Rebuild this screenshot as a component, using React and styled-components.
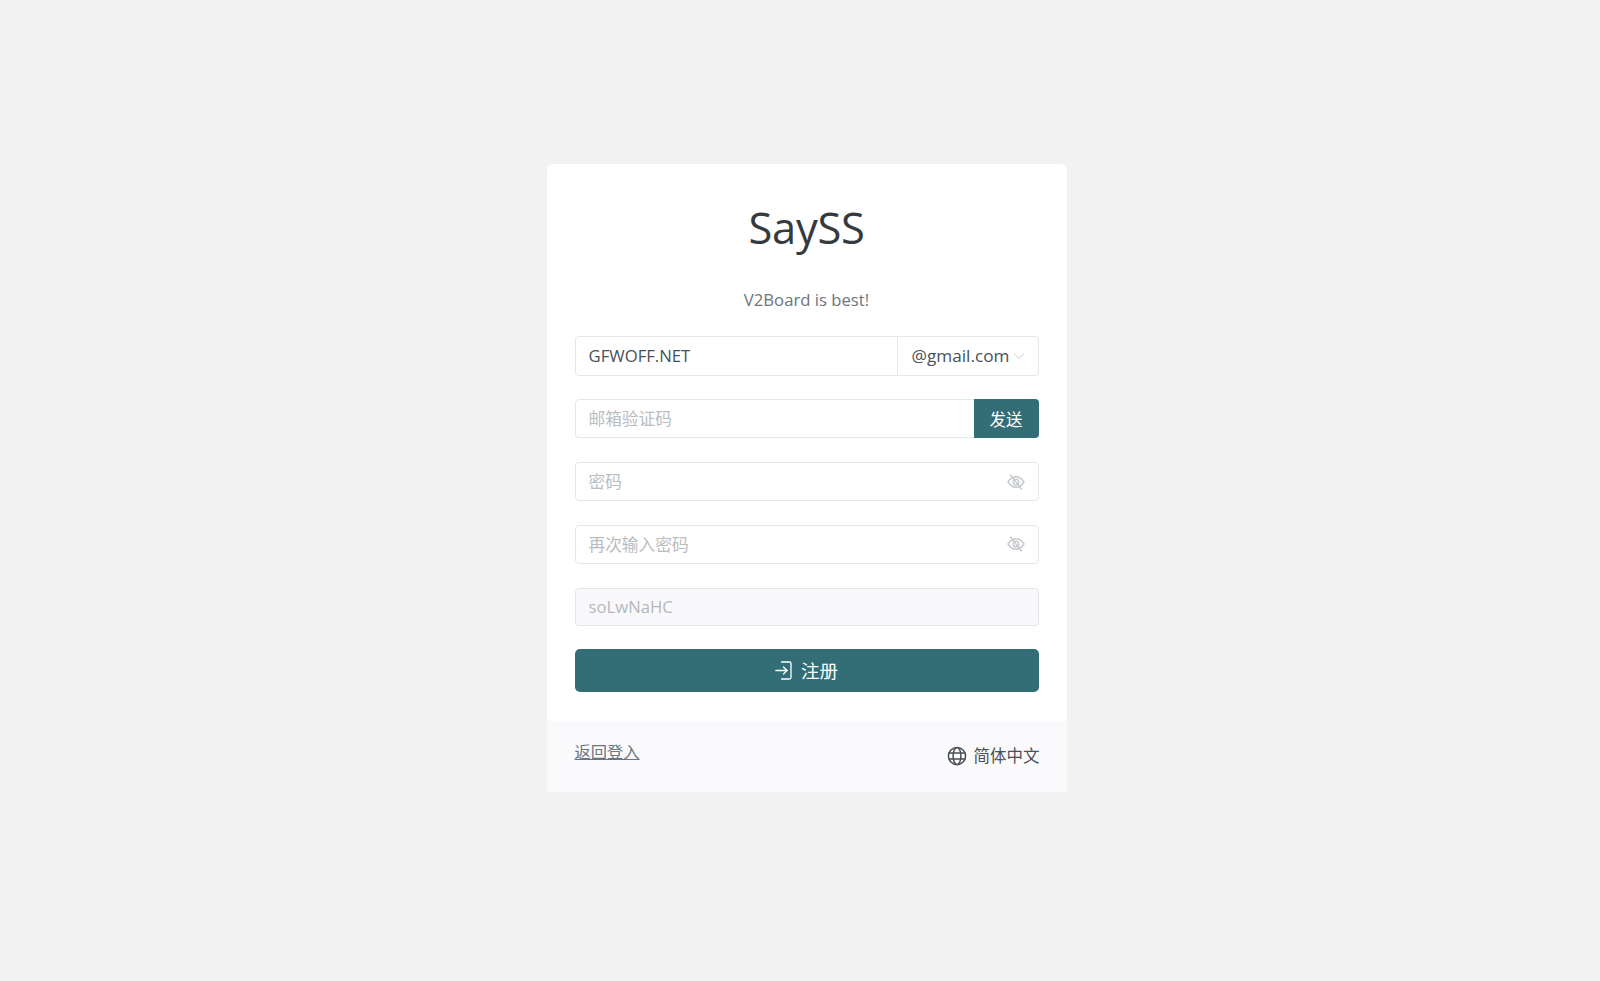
import React from "react";
import styled, { createGlobalStyle } from "styled-components";

const FONT = `"Open Sans", "Noto Sans CJK SC", sans-serif`;

const Global = createGlobalStyle`
  html, body { margin: 0; padding: 0; background: #f2f2f2; }
  body { font-family: ${FONT}; color: #3a3f44; }
  * { box-sizing: border-box; }
`;

const Page = styled.div`
  min-height: 981px;
  display: flex;
  justify-content: center;
  align-items: flex-start;
  padding: 164px 0 0 13px;
  background: #f2f2f2;
`;

const Card = styled.main`
  width: 520px;
  height: 628px;
  background: #fff;
  border-radius: 6px 6px 2px 2px;
  display: flex;
  flex-direction: column;
  overflow: hidden;
`;

const Body = styled.div`
  flex: 1;
  padding: 0 28px;
  display: flex;
  flex-direction: column;
`;

const Title = styled.h1`
  margin: 34px 0 0;
  font-size: 43.5px;
  line-height: 60px;
  font-weight: 400;
  text-align: center;
  color: #343a40;
  letter-spacing: -0.3px;
`;

const Subtitle = styled.p`
  margin: 30px 0 0;
  font-size: 16.7px;
  line-height: 24px;
  text-align: center;
  color: #6c757d;
`;

const Form = styled.form`
  margin: 0;
  padding-top: 24px;
  display: flex;
  flex-direction: column;
  gap: 23.4px;
`;

const Field = styled.div`
  height: ${(p) => (p.$disabled ? "38.3px" : "39.5px")};
  display: flex;
  align-items: stretch;
  background: ${(p) => (p.$disabled ? "#f9f9fb" : "#fff")};
  border: 1px solid #e4e7ea;
  border-radius: 4px;
`;

const Input = styled.input`
  flex: 1;
  min-width: 0;
  border: 0;
  outline: 0;
  background: transparent;
  padding: 0 13px;
  font-family: ${FONT};
  font-size: 16.7px;
  color: #495057;
  &::placeholder { color: #b9bdc1; opacity: 1; }
  &:disabled { color: #b4b8bc; -webkit-text-fill-color: #b4b8bc; }
`;

const Suffix = styled.span`
  width: 42px;
  display: flex;
  align-items: center;
  justify-content: center;
  padding-right: 2px;
`;

const Domain = styled.div`
  width: 141px;
  flex: none;
  border-left: 1px solid #e4e7ea;
  display: flex;
  align-items: center;
  justify-content: space-between;
  padding: 0 13px 0 14px;
  font-size: 17.2px;
  color: #495057;
  white-space: nowrap;
`;

const SendButton = styled.button`
  width: 65px;
  flex: none;
  margin: -1px -1px -1px 0;
  border: 0;
  border-radius: 0 4px 4px 0;
  background: #336d75;
  color: #fff;
  font-family: ${FONT};
  font-size: 16.5px;
  padding: 0;
`;

const SubmitButton = styled.button`
  height: 43px;
  width: 100%;
  border: 0;
  border-radius: 5px;
  background: #336d75;
  color: #fff;
  font-family: ${FONT};
  font-size: 18.5px;
  display: flex;
  align-items: center;
  justify-content: center;
  gap: 9px;
  padding: 0 0 1px;
`;

const Footer = styled.footer`
  height: 71.5px;
  flex: none;
  background: #fafafc;
  padding: 0 27px 0 28px;
  display: flex;
  justify-content: space-between;
  align-items: flex-start;
`;

const BackLink = styled.a`
  margin-top: 19px;
  font-size: 16.3px;
  line-height: 24px;
  color: #6c757d;
  text-decoration: underline;
`;

const Language = styled.div`
  margin-top: 22px;
  display: flex;
  align-items: center;
  gap: 7px;
  font-size: 16.5px;
  line-height: 26px;
  color: #495057;
`;

const Chevron = () => (
  <svg width="12" height="12" viewBox="0 0 12 12" fill="none" stroke="#c9cccf" strokeWidth="1">
    <path d="M1 3.5 L6 8.5 L11 3.5" />
  </svg>
);

const EyeOffIcon = () => (
  <svg width="18" height="16" viewBox="0 0 18 16" fill="none" stroke="#c6c9cc" strokeWidth="1.4" strokeLinecap="round">
    <path d="M1 8 C3.5 4.2 6 2.8 9 2.8 C12 2.8 14.5 4.2 17 8 C14.5 11.8 12 13.2 9 13.2 C6 13.2 3.5 11.8 1 8 Z" />
    <circle cx="9" cy="8" r="2.8" />
    <path d="M3.5 1 L14.5 15" />
  </svg>
);

const LoginIcon = () => (
  <svg width="17" height="19" viewBox="0 0 17 19" fill="none" stroke="#fff" strokeWidth="1.3" strokeLinecap="round" strokeLinejoin="round">
    <path d="M6.5 1 H14.5 Q16 1 16 2.5 V16.5 Q16 18 14.5 18 H6.5" />
    <path d="M0.8 9.5 H12" />
    <path d="M8.5 6 L12 9.5 L8.5 13" />
  </svg>
);

const GlobeIcon = () => (
  <svg width="20" height="20" viewBox="0 0 20 20" fill="none" stroke="#4a4f54" strokeWidth="1.5">
    <circle cx="10" cy="10" r="8.6" />
    <ellipse cx="10" cy="10" rx="3.9" ry="8.6" />
    <path d="M1.8 7 H18.2 M1.8 13 H18.2" />
  </svg>
);

export default function App() {
  return (
    <Page>
      <Global />
      <Card>
        <Body>
          <Title>SaySS</Title>
          <Subtitle>V2Board is best!</Subtitle>
          <Form>
            <Field>
              <Input defaultValue="GFWOFF.NET" />
              <Domain>
                @gmail.com
                <Chevron />
              </Domain>
            </Field>
            <Field>
              <Input placeholder="邮箱验证码" />
              <SendButton type="button">发送</SendButton>
            </Field>
            <Field>
              <Input placeholder="密码" type="password" />
              <Suffix><EyeOffIcon /></Suffix>
            </Field>
            <Field>
              <Input placeholder="再次输入密码" type="password" />
              <Suffix><EyeOffIcon /></Suffix>
            </Field>
            <Field $disabled>
              <Input defaultValue="soLwNaHC" disabled />
            </Field>
            <SubmitButton type="button">
              <LoginIcon />
              注册
            </SubmitButton>
          </Form>
        </Body>
        <Footer>
          <BackLink href="#">返回登入</BackLink>
          <Language>
            <GlobeIcon />
            简体中文
          </Language>
        </Footer>
      </Card>
    </Page>
  );
}
